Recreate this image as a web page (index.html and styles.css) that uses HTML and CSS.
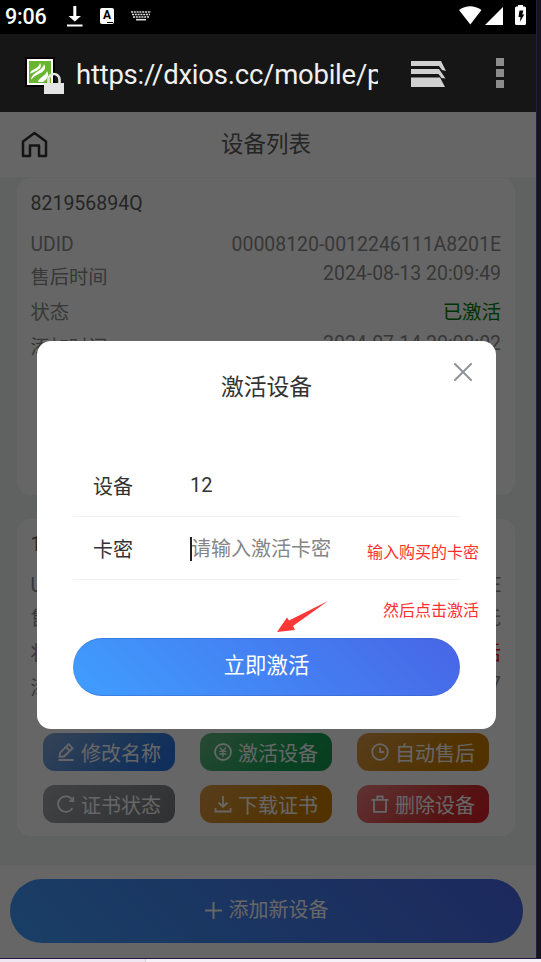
FILE: index.html
```html
<!DOCTYPE html>
<html lang="zh-CN">
<head>
<meta charset="utf-8">
<title>设备列表</title>
<link rel="stylesheet" href="styles.css">
</head>
<body>
<svg width="0" height="0" class="defs">
  <symbol id="edit" viewBox="0 0 18 18"><path d="M2.500 13.800 3 9.800 11.600 1.200 15.600 5.200 7 13.500ZM9 4l3.800 3.800M1.500 17h15" /></symbol>
  <symbol id="yen" viewBox="0 0 18 18"><circle cx="9" cy="9" r="8"/><path d="m6 4.500 3 3.500 3-3.500M9 8v6M5.500 8.300h7M5.500 11h7" stroke-width="1.300"/></symbol>
  <symbol id="clock" viewBox="0 0 18 18"><circle cx="9" cy="9" r="7.8"/><path d="M9 4.500V9h4.200"/></symbol>
  <symbol id="refresh" viewBox="0 0 18 18"><path d="M15.500 13.200A7.800 7.800 0 1 1 15.500 5M16.300 2v4.200h-4"/></symbol>
  <symbol id="down" viewBox="0 0 18 18"><path d="M9 1v10.500M4.500 7.500 9 12l4.500-4.500M1.500 13V16.500H16.500V13"/></symbol>
  <symbol id="trash" viewBox="0 0 18 18"><path d="M.5 4.800h17M3 5v11.800h12V5M6.300 4.500V1.500h5.400v3"/></symbol>
</svg>
<div class="phone">
  <div class="status">
    <span class="time">9:06</span>
    <svg class="st-down" width="16" height="21" viewBox="0 0 16 21"><path d="M6.300 0h3v10H14l-6.200 5.500L1.500 10h4.800zM0 18.500h15.500v2H0z" fill="#fff"/></svg>
    <span class="badge-a">A<i></i></span>
    <svg class="st-kb" width="20" height="10" viewBox="0 0 20 10"><path d="M0 1h20M1 3.500h18M2 6h16" stroke="#ddd" stroke-width="1.500" stroke-dasharray="2 .8"/><path d="M5 8.700h10" stroke="#ddd" stroke-width="1.600"/></svg>
    <svg class="st-right" width="68" height="21" viewBox="0 0 68 21"><path d="M0 5Q11-2.500 22.500 5L11.300 19.500zM44 2v18H26zM56 3q0-1.500 1.500-1.500H59V0h5v1.500h1.500Q67 1.500 67 3v15.500q0 1.500-1.500 1.500h-8Q56 20 56 18.500z" fill="#fff"/><path d="M60.500 5.500h3.800l-1 4h2l-4.500 7.500.7-5h-2z" fill="#000"/></svg>
  </div>
  <div class="urlbar">
    <svg class="favicon" width="40" height="38" viewBox="0 0 40 38"><path d="M0 0h30v30H0z" fill="#000"/><path d="M2 2h26v26H2z" fill="#fff"/><path d="M4 4h22v22H4z" fill="#6ab52f"/><path d="M5 16C6 12 14 12 15 6c3 5-2 7-6 9-2 1-3 2-4 1ZM6 22C7 15 18 14 19 7c4 7-4 9-9 12-2 1-3 4-4 3ZM13 25c1-5 8-6 9-11 3 5 0 8-4 11z" fill="#fff"/><path d="M23.500 26v-3.500a5.500 5.500 0 0 1 11 0V26" fill="none" stroke="#e4e4e4" stroke-width="2.600"/><path d="M19 26h20v11H19z" fill="#e4e4e4"/></svg>
    <div class="url">https://dxios.cc/mobile/p</div>
    <svg class="tabs" width="36" height="28" viewBox="0 0 36 28"><path d="M0 1h30l5 10-4-1-3-4H0zM0 9h28l6.500 9.500-4-.5-3-4H0zM0 17.500h29l5 9.500H0z" fill="#d0d0d0"/></svg>
    <div class="dots"><i></i><i></i><i></i></div>
  </div>
  <div class="page">
    <div class="head">
      <svg class="home" width="27" height="27" viewBox="0 0 27 27"><path d="M2 10.500 13.500 2 25 10.500V25h-7v-10.500h-9V25H2z" fill="none" stroke="#333" stroke-width="2.500" stroke-linejoin="round"/></svg>
      <h1>设备列表</h1>
    </div>
    <div class="list">
      <div class="card">
        <div class="name">821956894Q</div>
        <div class="row udid"><span>UDID</span><b>00008120-0012246111A8201E</b></div>
        <div class="row date"><span>售后时间</span><b>2024-08-13 20:09:49</b></div>
        <div class="row"><span>状态</span><b class="on">已激活</b></div>
        <div class="row date"><span>添加时间</span><b>2024-07-14 20:08:02</b></div>
        <div class="acts">
          <a class="blue"><svg><use href="#edit"/></svg>修改名称</a><a class="green"><svg><use href="#yen"/></svg>激活设备</a><a class="orange"><svg><use href="#clock"/></svg>自动售后</a>
          <a class="grey"><svg><use href="#refresh"/></svg>证书状态</a><a class="orange"><svg><use href="#down"/></svg>下载证书</a><a class="red"><svg><use href="#trash"/></svg>删除设备</a>
        </div>
      </div>
      <div class="card">
        <div class="name">12</div>
        <div class="row udid"><span>UDID</span><b>E</b></div>
        <div class="row"><span>售后时间</span><b>无</b></div>
        <div class="row"><span>状态</span><b class="off">未激活</b></div>
        <div class="row date"><span>添加时间</span><b>7</b></div>
        <div class="acts">
          <a class="blue"><svg><use href="#edit"/></svg>修改名称</a><a class="green"><svg><use href="#yen"/></svg>激活设备</a><a class="orange"><svg><use href="#clock"/></svg>自动售后</a>
          <a class="grey"><svg><use href="#refresh"/></svg>证书状态</a><a class="orange"><svg><use href="#down"/></svg>下载证书</a><a class="red"><svg><use href="#trash"/></svg>删除设备</a>
        </div>
      </div>
    </div>
    <div class="foot"><div class="add"><svg width="17" height="17" viewBox="0 0 17 17"><path d="M8.500 0v17M0 8.500h17" stroke="#fff" stroke-width="2"/></svg>添加新设备</div></div>
    <div class="mask"></div>
    <div class="modal">
      <svg class="close" width="18" height="18" viewBox="0 0 18 18"><path d="m1 1 16 16M17 1 1 17" stroke="#909399" stroke-width="2" stroke-linecap="round"/></svg>
      <h2>激活设备</h2>
      <div class="field"><label>设备</label><span>12</span></div>
      <div class="field"><label>卡密</label><span class="ph">请输入激活卡密</span></div>
      <div class="submit">立即激活</div>
      <div class="note note1">输入购买的卡密</div>
      <div class="note note2">然后点击激活</div>
      <svg class="arrow" width="52" height="32" viewBox="0 0 52 32"><path d="M51 0 16 25l2 4-18 2L10 16.500l2 3z" fill="#ff3737"/></svg>
    </div>
  </div>
</div>
<div class="edge"></div>
<div class="base"><i></i></div>
</body>
</html>
```

FILE: styles.css
```css
* { box-sizing: border-box; }
body {
  margin: 0; width: 541px; height: 962px; overflow: hidden;
  display: grid; grid-template: 958px 4px / 536px 5px;
  background: #15151b;
  font-family: Roboto, "Noto Sans CJK SC", sans-serif; color: #333;
}
.defs { position: absolute; }
.phone { height: 958px; overflow: hidden; }
.edge { border-left: 1px solid #211c48; background: #15151b; }
.base { grid-column: 1 / 3; border-top: 1px solid #1f1740; background: #f6f1f8; }
.base i { display: block; width: 146px; height: 3px; background: #efe7f1; border-right: 1px solid #d3cdd8; }

.status { height: 34px; background: #000; display: flex; align-items: flex-start; padding: 0 9px 0 5px; color: #fff; }
.time { font-size: 21.5px; line-height: 34px; font-weight: 500; letter-spacing: -.2px; width: 62px; }
.st-down { margin-top: 6px; }
.badge-a { width: 14px; height: 16px; margin: 8px 0 0 17px; border-radius: 2px; background: #fff; color: #000; font: 700 12px/14px Roboto, sans-serif; text-align: center; }
.badge-a i { display: block; width: 6px; height: 1px; margin: 0 0 0 7px; background: #000; }
.st-kb { margin: 11px 0 0 17px; }
.st-right { margin: 5px 0 0 auto; flex: none; }

.urlbar { height: 78px; background: #161616; display: flex; align-items: center; padding-left: 25px; }
.favicon { margin-top: 6px; }
.url { width: 302px; margin: 3px 0 0 11px; overflow: hidden; white-space: nowrap; font-size: 27.5px; letter-spacing: -.24px; line-height: 40px; color: #f0f0f0; }
.tabs { margin: 1px 0 0 33px; }
.dots { margin-left: 49px; display: grid; gap: 3px; }
.dots i { width: 8px; height: 8px; background: #8c8c8c; }

.page { position: relative; height: 846px; background: #f1f6f3; }
.head { height: 66px; background: #fff; border-bottom: 1px solid #f5f5f5; display: grid; grid-template-columns: 48px 1fr 52px; align-items: center; }
.home { margin-left: 21px; }
h1 { margin: 0; text-align: center; font-size: 22.5px; font-weight: 400; line-height: 65px; color: #5c5c5c; }
.list { height: 687px; padding: 0 21px 0 17px; }
.card { height: 317px; margin-bottom: 24px; padding: 1px 14px 0 13.500px; border-radius: 14px; background: #fff; }
.name { height: 50px; font-size: 19.5px; line-height: 50px; color: #5c5c5c; }
.row { height: 35px; display: flex; justify-content: space-between; align-items: center; font-size: 19.3px; line-height: 24px; color: #8c8c8c; }
.row b { font-weight: 400; font-size: 19.45px; }
.udid { height: 32px; margin-bottom: -1px; }
.date b { padding-bottom: 8px; }
.row .on { color: #008000; }
.row .off { color: #f00; }
.acts { padding: 27px 12px 0 12.500px; display: grid; grid-template-columns: repeat(3, 132px); column-gap: 25px; row-gap: 14px; }
.acts a { height: 38px; border-radius: 12px; display: flex; align-items: center; justify-content: center; gap: 6px; font-size: 20px; line-height: 38px; padding-top: 3px; color: #fff; white-space: nowrap; }
.acts svg { width: 18px; height: 18px; margin-top: -3px; fill: none; stroke: #fff; stroke-width: 1.8; }
.blue { background: linear-gradient(135deg, #84a9d4, #337de0 70%, #2471e5); }
.green { background: linear-gradient(135deg, #65b783, #14a454 70%, #159950); }
.orange { background: linear-gradient(135deg, #d99a4a, #cc8000 70%, #cc7b00); }
.grey { background: linear-gradient(135deg, #a4a5a9, #777a7e); }
.red { background: linear-gradient(135deg, #ed8080, #d63030 70%, #e01f28); }
.foot { height: 93px; padding: 14px 13px 0 10px; background: #fff; }
.add { height: 64px; border-radius: 32px; display: flex; justify-content: center; align-items: center; gap: 7px; padding-bottom: 5px; color: #fff; font-size: 20px; background: linear-gradient(45deg, #409eff, #4865e6); }
.add svg { margin-top: 4px; }
.mask { position: absolute; inset: 0; background: rgba(0, 0, 0, .6); }

.modal { position: absolute; left: 37px; top: 229px; width: 459px; height: 388px; padding: 0 36px; border-radius: 14px; background: #fff; }
.close { position: absolute; left: 417px; top: 22px; }
h2 { margin: 0 0 21px; height: 92px; line-height: 94px; text-align: center; font-size: 22.8px; font-weight: 400; }
.field { height: 63px; border-bottom: 1px solid #f0f0f0; padding-left: 20px; display: flex; align-items: center; font-size: 20px; }
.field label { width: 97px; }
.ph { position: relative; top: 1px; padding-left: 1px; color: #858585; line-height: 24px; }
.ph::before { content: ""; position: absolute; left: 0; top: 0; width: 2px; height: 24px; background: #222; }
.submit { margin-top: 58px; height: 58px; border-radius: 29px; color: #fff; text-align: center; font-size: 21.4px; line-height: 54px; background: linear-gradient(45deg, #409eff, #4865e6); border: 1px solid rgba(48, 90, 190, .4); border-width: 1px 0; background-origin: border-box; }
.note { position: absolute; right: 17px; color: #ff3030; font-size: 16px; line-height: 20px; }
.note1 { top: 202px; }
.note2 { top: 260px; }
.arrow { position: absolute; left: 240px; top: 260px; }
```
